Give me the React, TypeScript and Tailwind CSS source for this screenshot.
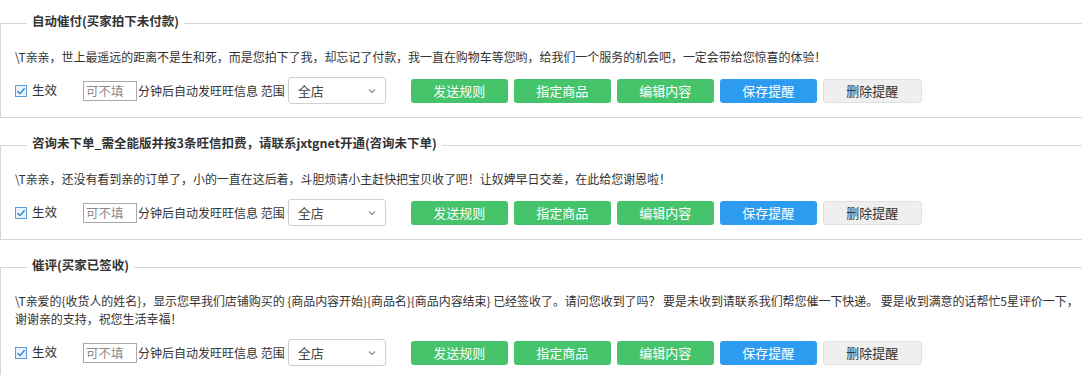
import React from 'react';

const font = { fontFamily: '"Microsoft YaHei", "Noto Sans CJK SC", "Liberation Sans", sans-serif' };

type Rule = {
  title: string;
  lines: string[];
};

const rules: Rule[] = [
  {
    title: '自动催付(买家拍下未付款)',
    lines: ['\\T亲亲，世上最遥远的距离不是生和死，而是您拍下了我，却忘记了付款，我一直在购物车等您哟，给我们一个服务的机会吧，一定会带给您惊喜的体验！'],
  },
  {
    title: '咨询未下单_需全能版并按3条旺信扣费，请联系jxtgnet开通(咨询未下单)',
    lines: ['\\T亲亲，还没有看到亲的订单了，小的一直在这后着，斗胆烦请小主赶快把宝贝收了吧！让奴婢早日交差，在此给您谢恩啦！'],
  },
  {
    title: '催评(买家已签收)',
    lines: [
      '\\T亲爱的{收货人的姓名}，显示您早我们店铺购买的 {商品内容开始}{商品名}{商品内容结束} 已经签收了。请问您收到了吗？ 要是未收到请联系我们帮您催一下快递。 要是收到满意的话帮忙5星评价一下，',
      '谢谢亲的支持，祝您生活幸福！',
    ],
  },
];

function CheckBox() {
  return (
    <svg width="12" height="12" viewBox="0 0 12 12" className="shrink-0">
      <rect x="0.5" y="0.5" width="11" height="11" fill="#eaf3fc" stroke="#5b9bd8" />
      <path d="M2.5 6.2 L5 8.6 L9.6 3.2" fill="none" stroke="#2f7fd0" strokeWidth="1.4" />
    </svg>
  );
}

function RuleBox({ rule, first }: { rule: Rule; first: boolean }) {
  return (
    <fieldset
      className={`w-[1110px] border border-[#d6d6d6] pl-[14px] pb-[13px] ${first ? 'mt-[12px]' : 'mt-[16px]'}`}
    >
      <legend className="ml-[12px] px-[5px] pb-[4px] text-[12.5px] font-bold leading-[18px] text-[#333]">{rule.title}</legend>
      <div className="pt-[14px] text-[12px] leading-[18px] text-[#333] tracking-[-0.05px]">
        {rule.lines.map((l) => (
          <div key={l} className="whitespace-nowrap">{l}</div>
        ))}
      </div>
      <div className="mt-[11px] flex items-center text-[12px] text-[#333]">
        <label className="flex items-center gap-[5px] w-[68px]">
          <CheckBox />
          <span className="text-[12.5px]">生效</span>
        </label>
        <input
          placeholder="可不填"
          className="w-[54px] h-[20px] border border-[#a9a9a9] px-[2px] text-[12.5px] placeholder:text-[#8a8a8a] outline-none"
          style={font}
        />
        <span className="ml-[1px] text-[12px]">分钟后自动发旺旺信息 范围</span>
        <div className="ml-[3px] w-[98px] h-[27px] border border-[#cfcfcf] rounded-[3px] flex items-center justify-between pl-[9px] pr-[9px]">
          <span className="text-[13px] text-[#444]">全店</span>
          <svg width="8" height="6" viewBox="0 0 8 6">
            <path d="M1 1.5 L4 4.5 L7 1.5" fill="none" stroke="#888" strokeWidth="1.1" />
          </svg>
        </div>
        <div className="ml-[25px] flex gap-[6px] text-[13px]">
          <button className="w-[97px] h-[24px] rounded-[3px] bg-[#45c46c] text-white">发送规则</button>
          <button className="w-[97px] h-[24px] rounded-[3px] bg-[#45c46c] text-white">指定商品</button>
          <button className="w-[97px] h-[24px] rounded-[3px] bg-[#45c46c] text-white">编辑内容</button>
          <button className="w-[97px] h-[24px] rounded-[3px] bg-[#2c9bf0] text-white">保存提醒</button>
          <button className="w-[99px] h-[24px] rounded-[3px] bg-[#efefef] border border-[#e0e0e0] text-[#333]">删除提醒</button>
        </div>
      </div>
    </fieldset>
  );
}

export default function App() {
  return (
    <div className="w-[1082px] h-[375px] overflow-hidden bg-white" style={font}>
      {rules.map((r, i) => (
        <RuleBox key={r.title} rule={r} first={i === 0} />
      ))}
    </div>
  );
}
